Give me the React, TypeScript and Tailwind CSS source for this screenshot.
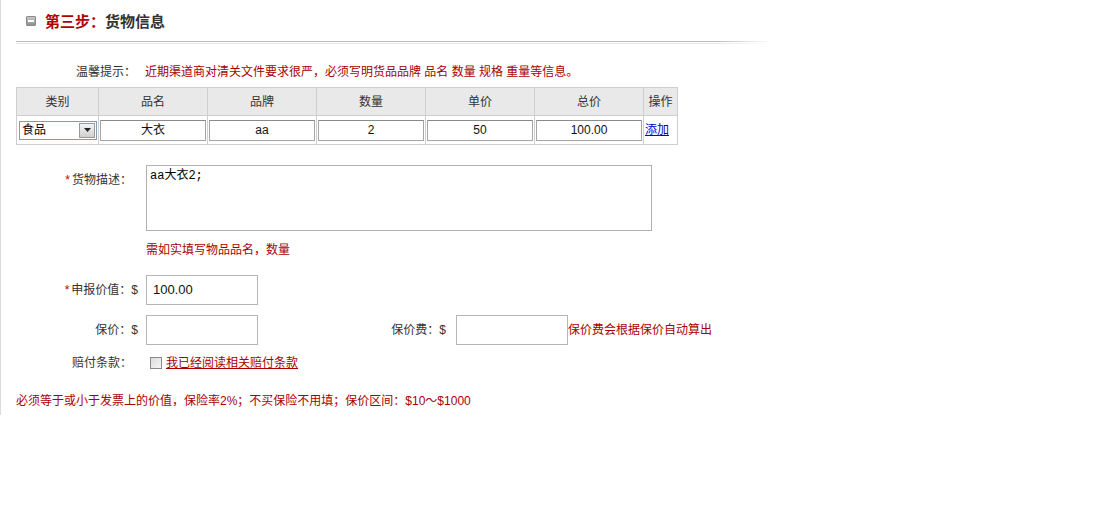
import React from "react";

const F = "font-['Liberation_Sans','Noto_Sans_CJK_SC',sans-serif]";

function Cell({ children, w }: { children: React.ReactNode; w: string }) {
  return (
    <td className={`${w} border border-[#cfcfcf] p-0 align-middle`}>{children}</td>
  );
}

function TInput({ value, w }: { value: string; w: string }) {
  return (
    <div className={`${w} mx-auto h-[21px] border border-[#a5a5a5] border-t-[#8a8a8a] bg-white text-center text-[12px] leading-[19px] text-[#111]`}>
      {value}
    </div>
  );
}

export default function App() {
  const cols = ["类别", "品名", "品牌", "数量", "单价", "总价", "操作"];
  return (
    <div className={`${F} min-h-[509px] w-[1095px] bg-white text-[12px] text-[#333]`}>
      <div className="h-[415px] w-[770px] border-l border-[#dcdcdc]">
        {/* header */}
        <div className="flex h-[41px] items-center pl-[25px] pt-[1px]">
          <div className="flex h-[10px] w-[10px] items-center justify-center rounded-[1px] border border-[#8a8a8a] bg-gradient-to-b from-[#c9c9c9] to-[#8f8f8f]">
            <div className="h-[2px] w-[6px] bg-white" />
          </div>
          <span className="ml-[9px] text-[15px] font-bold leading-none text-[#b30000]">第三步：</span>
          <span className="text-[15px] font-bold leading-none text-[#333]">货物信息</span>
        </div>
        {/* divider */}
        <div className="ml-[15px] w-[755px]">
          <div className="h-[1px] bg-gradient-to-r from-[#bdbdbd] from-[93%] to-transparent" />
          <div className="h-[1px]" />
          <div className="h-[1px] bg-gradient-to-r from-[#e8e8e8] from-[93%] to-transparent" />
        </div>
        {/* tip */}
        <div className="mt-[21px] flex h-[14px] items-center leading-none">
          <span className="ml-[75px] w-[69px] text-[#333]">温馨提示：</span>
          <span className="text-[#a80000]">近期渠道商对清关文件要求很严，必须写明货品品牌 品名 数量 规格 重量等信息。</span>
        </div>
        {/* table */}
        <table className="ml-[15px] mt-[8px] border-collapse text-[12px]">
          <thead>
            <tr className="h-[28px] bg-[#e9e9e9]">
              {cols.map((c, i) => (
                <th
                  key={c}
                  className={`${i === 0 ? "w-[82px]" : i === 6 ? "w-[34px]" : "w-[109px]"} border border-[#cfcfcf] p-0 text-center font-normal text-[#333]`}
                >
                  {c}
                </th>
              ))}
            </tr>
          </thead>
          <tbody>
            <tr className="h-[29px]">
              <Cell w="w-[82px]">
                <div className="ml-[2px] flex h-[19px] w-[78px] items-center border border-[#7f9db9] bg-white">
                  <span className="flex-1 pl-[2px] text-[12px] leading-none text-[#000]">食品</span>
                  <div className="mr-[1px] flex h-[15px] w-[16px] items-center justify-center border border-[#9a9a9a] bg-gradient-to-b from-[#f4f4f4] to-[#cfcfcf]">
                    <svg width="7" height="4" viewBox="0 0 7 4"><path d="M0 0h7L3.5 4z" fill="#222" /></svg>
                  </div>
                </div>
              </Cell>
              <Cell w="w-[109px]"><TInput value="大衣" w="w-[106px]" /></Cell>
              <Cell w="w-[109px]"><TInput value="aa" w="w-[106px]" /></Cell>
              <Cell w="w-[109px]"><TInput value="2" w="w-[106px]" /></Cell>
              <Cell w="w-[109px]"><TInput value="50" w="w-[106px]" /></Cell>
              <Cell w="w-[109px]"><TInput value="100.00" w="w-[106px]" /></Cell>
              <Cell w="w-[34px]">
                <span className="ml-[1px] text-[#0000cc] underline">添加</span>
              </Cell>
            </tr>
          </tbody>
        </table>
        {/* description */}
        <div className="mt-[20px] flex">
          <div className="w-[131px] pt-[9px] text-right leading-none">
            <span className="text-[#c00000]">*</span>
            <span className="ml-[2px]">货物描述：</span>
          </div>
          <div className="ml-[14px] h-[66px] w-[506px] border border-[#b0b0b0] bg-white px-[3px] pt-[3px] font-['Liberation_Mono','Noto_Sans_CJK_SC',monospace] text-[12px] leading-[14px] text-[#000]">
            aa大衣2;
          </div>
        </div>
        <div className="ml-[145px] mt-[13px] leading-none text-[#a80000]">需如实填写物品品名，数量</div>
        {/* declared value */}
        <div className="mt-[19px] flex items-center">
          <div className="w-[137px] text-right leading-none">
            <span className="text-[#c00000]">*</span>
            <span className="ml-[2px]">申报价值：$</span>
          </div>
          <div className="ml-[8px] flex h-[30px] w-[112px] items-center border border-[#b5b5b5] bg-white pl-[6px] text-[13px] text-[#111]">100.00</div>
        </div>
        <div className="mt-[10px] flex items-center">
          <div className="w-[137px] text-right leading-none">保价：$</div>
          <div className="ml-[8px] h-[30px] w-[112px] border border-[#b5b5b5] bg-white" />
          <div className="w-[188px] text-right leading-none">保价费：$</div>
          <div className="ml-[10px] h-[30px] w-[112px] border border-[#b5b5b5] bg-white" />
          <div className="text-[12px] leading-none text-[#a80000]">保价费会根据保价自动算出</div>
        </div>
        <div className="mt-[11px] flex h-[14px] items-center">
          <div className="w-[131px] text-right leading-none">赔付条款：</div>
          <div className="ml-[18px] h-[12px] w-[12px] border border-[#8a8a8a] bg-gradient-to-br from-[#dcdcdc] to-[#f6f6f6]" />
          <span className="ml-[4px] text-[#a80000] underline leading-none">我已经阅读相关赔付条款</span>
        </div>
        <div className="ml-[15px] mt-[25px] leading-none text-[#a80000]">
          必须等于或小于发票上的价值，保险率2%；不买保险不用填；保价区间：$10～$1000
        </div>
      </div>
    </div>
  );
}
